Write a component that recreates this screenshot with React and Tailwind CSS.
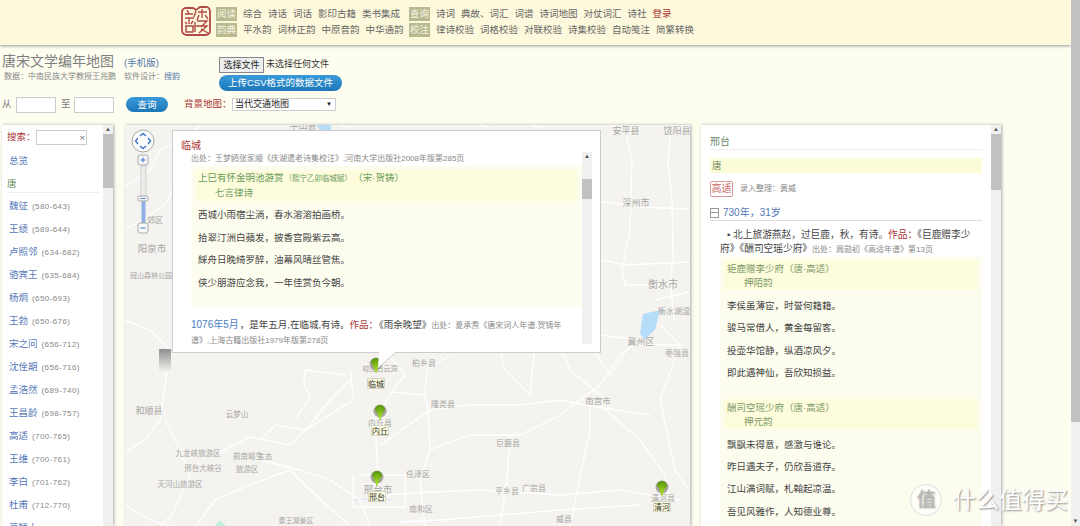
import React from "react";

const cjk = "font-['Liberation_Sans','Noto_Sans_CJK_SC',sans-serif]";

const navRow1 = [
    { chip: "阅读", items: ["综合", "诗话", "词话", "影印古籍", "类书集成"] },
    { chip: "查询", items: ["诗词", "典故、词汇", "词谱", "诗词地图", "对仗词汇", "诗社"] },
];
const navRow2 = [
    { chip: "韵典", items: ["平水韵", "词林正韵", "中原音韵", "中华通韵"] },
    { chip: "校注", items: ["律诗校验", "词格校验", "对联校验", "诗集校验", "自动笺注", "简繁转换"] },
];

const poets = [
    ["魏征", "(580-643)"], ["王绩", "(589-644)"], ["卢照邻", "(634-682)"], ["骆宾王", "(635-684)"],
    ["杨炯", "(650-693)"], ["王勃", "(650-676)"], ["宋之问", "(656-712)"], ["沈佺期", "(656-716)"],
    ["孟浩然", "(689-740)"], ["王昌龄", "(698-757)"], ["高适", "(700-765)"], ["王维", "(700-761)"],
    ["李白", "(701-762)"], ["杜甫", "(712-770)"], ["萧颖士", "(717-758)"],
];

// x, y are the page coordinates of the label centre
const mapLabels = [
    ["平山县", 303, 129, 9], ["安平县", 626, 134, 9], ["饶阳县", 677, 134, 9], ["深州市", 636, 206, 9],
    ["衡水市", 663, 288, 10], ["衡水湖湿", 674, 314, 8], ["冀州区", 641, 345, 9], ["枣强县", 677, 356, 8],
    ["郊区", 155, 223, 8], ["阳泉市", 152, 252, 9.5], ["冠山森林公园", 151, 278, 7],
    ["和顺县", 149, 414, 9], ["云梦山", 237, 417, 7.5], ["九龙峡旅游区", 198, 456, 7.5],
    ["邢台大峡谷", 203, 471, 7.5], ["天河山旅游区", 180, 487, 7.5], ["前南峪生", 248, 459, 7.5], ["旅游区", 247, 472, 7.5],
    ["柏乡县", 424, 366, 8], ["隆尧县", 443, 407, 8], ["内丘县", 380, 426, 8], ["巨鹿县", 508, 446, 8],
    ["南宫市", 598, 404, 8.5], ["任泽区", 418, 477, 8], ["邢台市", 378, 493, 9.5], ["平乡县", 507, 494, 8],
    ["广宗县", 534, 491, 8], ["南和区", 421, 512, 8], ["威县", 564, 522, 8], ["清河县", 663, 501, 8],
    ["秦王湖景区", 296, 523, 7], ["崆山白云洞", 380, 371, 7], ["生态", 265, 459, 7],
];

const roads = [
    "M125 187 L150 170 L160 150 L185 140 L200 125",
    "M125 230 L150 215 L165 205 L172 190",
    "M125 320 L150 330 L170 350 L165 385 L160 420 L145 440 L125 452",
    "M165 420 L180 450 L190 475 L172 515 L160 526",
    "M125 505 L150 520 L170 526",
    "M196 526 L215 500 L250 485 L290 470 L310 490 L350 526",
    "M220 452 L250 437 L290 445 L310 425 L330 400 L350 380",
    "M260 440 L275 425 L305 430 L345 405 L354 400 L350 370",
    "M260 460 L300 470 L330 480 L360 500 L370 526",
    "M345 375 L305 370 L304 384 L310 397 L295 420",
    "M380 345 L405 375 L392 392 L375 420 L379 500",
    "M392 392 L425 395 L427 370 L450 355",
    "M425 395 L428 410 L430 450 L420 480 L425 526",
    "M380 445 L430 410 L470 405 L520 405 L560 400 L590 406 L650 415",
    "M430 450 L470 435 L520 435 L560 415 L600 385 L620 355 L640 340",
    "M510 435 L507 480 L500 526",
    "M385 495 L430 492 L480 490 L560 495 L620 490 L680 500",
    "M600 405 L640 440 L665 475 L670 500",
    "M590 400 L590 430 L570 526",
    "M400 522 L440 520 L500 515 L560 510 L640 505",
    "M500 350 L505 370 L530 395 L535 345",
    "M590 345 L610 375 L630 345 L680 345",
    "M560 345 L570 370 L600 395",
    "M660 325 L680 345 L660 400 L675 470 L689 490",
    "M610 125 L625 130 L632 160 L630 230 L622 270 L625 285 L660 285",
    "M670 135 L668 165 L672 200 L673 260 L670 280 L674 320",
    "M602 202 L640 207 L689 209",
    "M602 260 L625 265 L689 262",
    "M600 335 L640 340",
    "M665 130 L689 125",
    "M655 300 L689 292",
    "M340 125 L350 128 M480 125 L490 128 M530 125 L545 128",
    "M362 475 L405 475 L405 507 L353 507 L353 475",
];

const pins = [
    { x: 376, y: 365, name: "临城" },
    { x: 380, y: 412, name: "内丘" },
    { x: 377, y: 478, name: "邢台" },
    { x: 662, y: 488, name: "清河" },
];

const poem1 = ["西城小雨宿尘淌，春水溶溶拍画桥。", "拾翠汀洲白蘋发，披香宫殿紫云高。", "綵舟日晚绮罗醉，油幕风晴丝管焦。", "侠少朋游应念我，一年佳赏负今朝。"];
const poem2 = ["李侯虽薄宦，时誉何籍籍。", "骏马常借人，黄金每留客。", "投壶华馆静，纵酒凉风夕。", "即此遇神仙，吾欣知损益。"];
const poem3 = ["飘飖未得意，感激与谁论。", "昨日遇夫子，仍欣吾道存。", "江山满词赋，札翰起凉温。", "吾见风雅作，人知德业尊。"];

const NavRow = ({ groups, tail }) => (
    <div className="flex items-center h-[16px] text-[9.5px] leading-[16px] text-[#666]">
        <div className="w-[193px] flex items-center gap-[6px]">
            <span className="w-[21px] h-[14px] bg-[#b9b98f] text-[#f5f5e4] text-center leading-[14px]">{groups[0].chip}</span>
            {groups[0].items.map((t) => <span key={t}>{t}</span>)}
        </div>
        <div className="flex items-center gap-[6px]">
            <span className="w-[21px] h-[14px] bg-[#b9b98f] text-[#f5f5e4] text-center leading-[14px]">{groups[1].chip}</span>
            {groups[1].items.map((t) => <span key={t}>{t}</span>)}
            {tail}
        </div>
    </div>
);

const ScrollBar = ({ thumbTop, thumbH, className = "" }) => (
    <div className={`w-[10px] h-full bg-[#f0f0f0] flex flex-col shrink-0 ${className}`}>
        <div className="h-[9px] text-[6px] leading-[9px] text-center text-[#555]">▲</div>
        {/* thumb offset differs per panel, value comes from the caller */}
        <div className="bg-[#c1c1c1]" style={{ marginTop: thumbTop, height: thumbH }} />
    </div>
);

const MapDrawing = () => (
    <svg className="absolute inset-0 w-[565px] h-[401px]" viewBox="125 125 565 401">
        <rect x="125" y="125" width="565" height="401" fill="#f5f3f0" />
        <polygon points="317,125 331,125 331,130 320,131" fill="#b5dcf8" />
        <polygon points="643,314 660,310 655,330 645,339 640,334" fill="#b5dcf8" />
        <polygon points="215,526 220,520 226,526" fill="#bfeedd" />
        <path d="M354 500 L375 498 L392 500" stroke="#cfe6f7" fill="none" />
        {roads.map((d, i) => <path key={i} d={d} fill="none" stroke="#fff" strokeWidth="1.3" />)}
        {mapLabels.map(([t, x, y, s]) => (
            <text key={t} x={x} y={y} fontSize={s} textAnchor="middle" fill="#a6a6a2" fontFamily="'Noto Sans CJK SC', sans-serif">{t}</text>
        ))}
        <defs>
            <linearGradient id="fade" x1="0" y1="0" x2="0" y2="1">
                <stop offset="0" stopColor="#8f8f8f" />
                <stop offset="1" stopColor="#f5f3f0" />
            </linearGradient>
            <radialGradient id="pinHead" cx="0.5" cy="0.75" r="0.7">
                <stop offset="0" stopColor="#a6de20" />
                <stop offset="1" stopColor="#5e9a10" />
            </radialGradient>
        </defs>
        <rect x="159" y="349" width="12" height="23" fill="url(#fade)" />
        {/* pan + zoom control */}
        <circle cx="143" cy="141" r="11" fill="#fbfbfb" stroke="#a8a8a8" />
        <path d="M140 136 L143 133.5 L146 136 M140 146 L143 148.5 L146 146 M138 138 L135.5 141 L138 144 M148 138 L150.5 141 L148 144" fill="none" stroke="#3f76c8" strokeWidth="1.4" />
        <rect x="141" y="166" width="5" height="33" fill="#ececec" stroke="#bbb" strokeWidth="0.6" />
        <rect x="141.5" y="199" width="4" height="24" fill="#8fb0e6" />
        <rect x="138" y="155" width="10" height="10" rx="2" fill="#f8f8f8" stroke="#aaa" />
        <path d="M140.5 160 H145.5 M143 157.5 V162.5" stroke="#3f76c8" strokeWidth="1" />
        <rect x="138" y="196" width="10" height="5" rx="1.5" fill="#f0f0f0" stroke="#aaa" />
        <path d="M140.5 198.5 H145.5" stroke="#3f76c8" strokeWidth="0.8" />
        <rect x="138" y="223" width="10" height="10" rx="2" fill="#f8f8f8" stroke="#aaa" />
        <path d="M140.5 228 H145.5" stroke="#3f76c8" strokeWidth="1" />
        {pins.map((p) => (
            <g key={p.name}>
                <circle cx={p.x} cy={p.y - 1} r="6.5" fill="#a5a5a0" />
                <path d={`M${p.x - 5} ${p.y - 2} A5 5 0 0 1 ${p.x + 5} ${p.y - 2} Q${p.x + 2} ${p.y + 1} ${p.x} ${p.y + 9} Q${p.x - 2} ${p.y + 1} ${p.x - 5} ${p.y - 2} Z`} fill="url(#pinHead)" />
                <rect x={p.x - 8.5} y={p.y + 13.5} width="17" height="10" fill="#fdfcdc" stroke="#cfcfc0" strokeWidth="0.8" />
                <text x={p.x} y={p.y + 21.5} fontSize="8" textAnchor="middle" fill="#333" fontFamily="'Noto Sans CJK SC', sans-serif">{p.name}</text>
            </g>
        ))}
    </svg>
);

const Popup = () => (
    <div className="absolute left-[47px] top-[5px] w-[429px] h-[223px] bg-white border border-[#ccc] pl-[8px] pt-[8px]">
        <div className="h-[13px] text-[10px] leading-[13px] text-[#a33]">临城</div>
        <div className="relative h-[192px] pl-[10px] pr-[8px] overflow-hidden">
            <div className="w-[391px]">
                <div className="h-[14px] text-[8px] leading-[13px] text-[#888] whitespace-nowrap">出处：王梦鸥张家顺《庆湖遗老诗集校注》,河南大学出版社2008年版第285页</div>
                <div className="bg-[#fdfdef] h-[140px] pt-[4px] px-[5px]">
                    <div className="h-[31px] bg-[#fdfcdc] pl-[2px] text-[9.5px] leading-[14px] pt-[1px] text-[#6a9a5b] whitespace-nowrap">
                        <div>上巳有怀金明池游赏<span className="text-[7.5px] mx-[1px]">（熙宁乙卯临城赋）</span><span className="ml-[5px]">（宋·贺铸）</span></div>
                        <div className="pl-[17px]">七言律诗</div>
                    </div>
                    <div className="pl-[2px] pt-[3px] text-[9.5px] text-[#444]">
                        {poem1.map((l) => <div key={l} className="h-[22.6px] leading-[22.6px]">{l}</div>)}
                    </div>
                </div>
                <div className="pt-[12px] pr-[14px] text-[9.5px] leading-[14px]">
                    <span className="text-[10px] text-[#4a7fc0]">1076年5月</span><span className="ml-[1px] text-[#444]">，是年五月,在临城,有诗。</span>
                    <span className="text-[#a33]">作品：</span><span className="ml-[1px] text-[#444]">《雨余晚望》</span>
                    <span className="text-[8px] text-[#888]">出处：夏承焘《唐宋词人年谱.贺铸年谱》,上海古籍出版社1979年版第278页</span>
                </div>
            </div>
            <ScrollBar thumbTop="18px" thumbH="20px" className="absolute right-[8px] top-0" />
        </div>
        {/* callout tail */}
        <svg className="absolute left-[200px] top-[221px] w-[24px] h-[17px]" viewBox="0 0 24 17">
            <path d="M6 0 L5 16 L23 0 Z" fill="#fff" />
            <path d="M5 16 L23 0" stroke="#ccc" fill="none" />
        </svg>
    </div>
);

const PoemBlock = ({ title, rhyme, lines }) => (
    <div className="mb-[14px]">
        <div className="h-[30px] bg-[#fdfcdc] mx-[4px] pl-[3px] text-[9.5px] leading-[14px] pt-[2px] text-[#7d9a68]">
            <div>{title}</div>
            <div className="pl-[17px]">{rhyme}</div>
        </div>
        <div className="pl-[7px] pt-[5px] text-[9.5px] text-[#444]">
            {lines.map((l) => <div key={l} className="h-[22.4px] leading-[22.4px]">{l}</div>)}
        </div>
    </div>
);

export default function App() {
    return (
        <div className={`relative w-[1080px] h-[526px] overflow-hidden bg-[#fdfdf0] ${cjk}`}>
            <div className="w-[1071px] h-[526px] flex flex-col">
                {/* top nav */}
                <div className="h-[45px] shrink-0 bg-[#fdf9dc] shadow-[0_1px_3px_#999] flex items-start pl-[180px] pt-[6px]">
                    <svg className="w-[32px] h-[32px] -mt-[1px] mr-[4px]" viewBox="0 0 32 32">
                        <path d="M5 3 H13 L16 5 L20 2 H27 Q30 3 30 7 V27 Q29 30 25 30 H6 Q2 29 2 25 V7 Q2 4 5 3 Z" fill="none" stroke="#b04a45" strokeWidth="1.8" />
                        <path d="M5 9 H13 M7 5 L9 9 M5 13 H14 M9 13 V19 M5 17 L7 19 M13 16 L11 19 M5 21 H14 M6 21 V27 H13 V21 M16 6 L14 12 M18 7 H27 M22 4 V13 M19 10 L17 15 M25 10 L28 14 M17 16 H27 L21 22 M16 21 H27 L19 28 M21 24 L28 28 M15 17 V27" fill="none" stroke="#b04a45" strokeWidth="1.4" />
                    </svg>
                    <div className="flex flex-col">
                        <NavRow groups={navRow1} tail={<span className="text-[#a83232]">登录</span>} />
                        <NavRow groups={navRow2} />
                    </div>
                </div>

                {/* title + upload */}
                <div className="h-[80px] shrink-0 relative">
                    <div className="flex h-[49px]">
                        <div className="w-[219px] pl-[2px] pt-[7px]">
                            <div className="flex items-baseline whitespace-nowrap">
                                <span className="text-[14px] leading-[18px] text-[#808080]">唐宋文学编年地图</span>
                                <span className="ml-[10px] text-[9.5px] text-[#5578a8]">(手机版)</span>
                            </div>
                            <div className="pl-[2px] pt-[1px] text-[8px] leading-[12px] text-[#888] whitespace-nowrap">
                                数据：中南民族大学教授王兆鹏<span className="ml-[8px]">软件设计：</span><span className="text-[#5578a8]">搜韵</span>
                            </div>
                        </div>
                        <div className="pt-[11px]">
                            <div className="flex items-center h-[17px]">
                                <span className="w-[45px] h-[16px] bg-[#eee] border border-[#888] text-[9px] leading-[14px] text-center text-[#222]">选择文件</span>
                                <span className="ml-[2px] text-[9px] text-[#333]">未选择任何文件</span>
                            </div>
                            <div className="mt-[2px] w-[123px] h-[16px] rounded-full bg-gradient-to-b from-[#3a9ad9] to-[#1b78b8] text-white text-[9.5px] leading-[16px] text-center">上传CSV格式的数据文件</div>
                        </div>
                    </div>
                    <div className="flex items-center h-[17px] pl-[2px] text-[9.5px] text-[#777] mt-[2px]">
                        <span className="w-[14px]">从</span>
                        <span className="w-[40px] h-[16px] bg-white border border-[#ccc]" />
                        <span className="ml-[5px] w-[13px]">至</span>
                        <span className="w-[40px] h-[16px] bg-white border border-[#ccc]" />
                        <span className="ml-[12px] w-[42px] h-[15px] rounded-full bg-gradient-to-b from-[#3a9ad9] to-[#1b78b8] text-white leading-[15px] text-center">查询</span>
                        <span className="ml-[16px] w-[48px] text-[#a33]">背景地图：</span>
                        <span className="w-[104px] h-[13px] bg-white border border-[#ccc] flex items-center justify-between pl-[2px] pr-[3px] text-[#222] text-[9px]">
                            当代交通地图<span className="text-[6px]">▼</span>
                        </span>
                    </div>
                </div>

                {/* three panels */}
                <div className="flex-1 min-h-0 flex pl-[2px]">
                    <div className="w-[111px] h-full bg-white shadow-[1px_0_3px_#aaa] flex overflow-hidden">
                        <div className="flex-1 min-w-0 pl-[5px] pr-[5px]">
                            <div className="flex items-center h-[19px] mt-[3px] text-[9.5px] text-[#a33]">
                                <span className="w-[29px]">搜索：</span>
                                <span className="w-[51px] h-[15px] border border-[#ccc] text-right pr-[1px] text-[#777] leading-[13px]">×</span>
                            </div>
                            <div className="h-[14px] mt-[7px] pl-[2px] text-[9.5px] leading-[14px] text-[#5578b8]">总览</div>
                            <div className="mt-[10px] h-[15px] text-[9.5px] leading-[12px] text-[#6a8a5b] border-b border-[#eee] w-[92px]">唐</div>
                            <div className="pt-[1px]">
                                {poets.map(([n, y]) => (
                                    <div key={n} className="h-[23px] leading-[23px] pl-[2px] text-[9.5px] text-[#5578b8] whitespace-nowrap">
                                        {n}<span className="ml-[4px] text-[8px] tracking-[0.4px] text-[#888]">{y}</span>
                                    </div>
                                ))}
                            </div>
                        </div>
                        <ScrollBar thumbTop="0px" thumbH="54px" />
                    </div>

                    <div className="relative ml-[12px] w-[565px] h-full overflow-visible shadow-[1px_0_3px_#aaa]">
                        <MapDrawing />
                        <Popup />
                    </div>

                    <div className="ml-[11px] w-[300px] h-full bg-white shadow-[1px_0_3px_#aaa] flex overflow-hidden">
                        <div className="w-[290px] min-w-0 pl-[9px] overflow-hidden">
                            <div className="h-[25px] pt-[10px] text-[10px] leading-[14px] text-[#6a8a6b] border-b border-[#eee] w-[272px]">邢台</div>
                            <div className="mt-[8px] w-[272px] h-[15px] bg-[#fdfcd8] pl-[2px] text-[9.5px] leading-[15px] text-[#6a8a5b]">唐</div>
                            <div className="flex items-center mt-[8px] h-[16px]">
                                <span className="w-[23px] h-[16px] border border-[#dc9a9a] rounded-[2px] text-[10px] leading-[14px] text-center text-[#c66]">高适</span>
                                <span className="ml-[7px] text-[8px] text-[#888]">录入整理：黄威</span>
                            </div>
                            <div className="flex items-center mt-[9px] h-[15px] border-b border-[#ddd] w-[272px] pb-[1px]">
                                <span className="w-[9px] h-[10px] border border-[#999] flex items-center"><span className="w-full h-px bg-[#999]" /></span>
                                <span className="ml-[4px] text-[10px] text-[#5578b8]">730年，31岁</span>
                            </div>
                            <div className="pl-[10px] pr-[4px] w-[272px] pt-[7px] text-[9.7px] leading-[14px] text-[#444] indent-[7px]">
                                • 北上旅游燕赵，过巨鹿，秋，有诗。<span className="text-[#a33]">作品：</span>《巨鹿赠李少府》《酬司空瑶少府》<span className="text-[8px] text-[#888]">出处：周勋初《高适年谱》第13页</span>
                            </div>
                            <div className="ml-[10px] w-[262px] bg-[#fdfdef] pt-[3px] h-[300px]">
                                <PoemBlock title="钜鹿赠李少府（唐·高适）" rhyme="押陌韵" lines={poem2} />
                                <PoemBlock title="酬司空瑶少府（唐·高适）" rhyme="押元韵" lines={poem3} />
                            </div>
                        </div>
                        <ScrollBar thumbTop="0px" thumbH="56px" />
                    </div>
                </div>
            </div>

            {/* browser scrollbar */}
            <div className="absolute right-0 top-0 w-[9px] h-full bg-[#f0f0f0] flex flex-col">
                <div className="h-[422px] bg-[#c1c1c1]" />
                <div className="mt-auto text-[6px] leading-[9px] text-center text-[#555]">▼</div>
            </div>

            {/* site watermark */}
            <div className="absolute left-[910px] top-[484px] flex items-center text-white [text-shadow:1px_1px_2px_#8a8a8a]">
                <span className="w-[32px] h-[32px] rounded-full bg-white/70 border border-[#ddd] text-[#bbb] text-[19px] leading-[30px] text-center">值</span>
                <span className="ml-[11px] text-[23px] leading-[32px] whitespace-nowrap">什么值得买</span>
            </div>
        </div>
    );
}
